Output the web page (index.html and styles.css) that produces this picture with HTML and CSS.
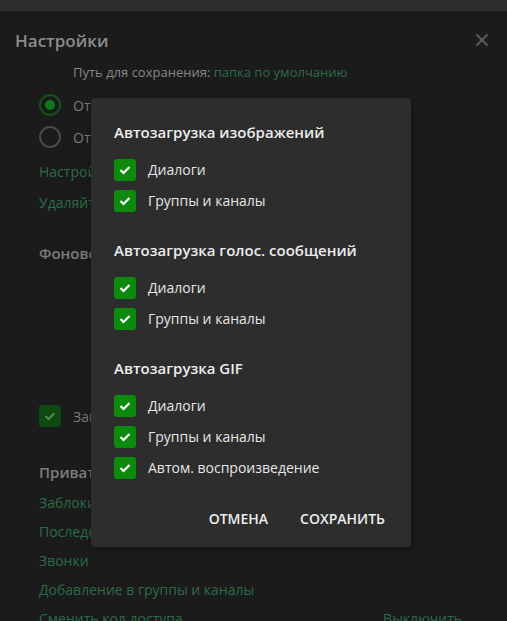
FILE: index.html
```html
<!DOCTYPE html>
<html lang="ru">
<head>
<meta charset="utf-8">
<link rel="stylesheet" href="styles.css">
</head>
<body>
<div class="topbar"></div>
<div class="settings">
  <div class="header">
    <span class="title">Настройки</span>
    <svg class="close" width="14" height="14" viewBox="0 0 14 14"><path d="M1.5 1.5 L12.5 12.5 M12.5 1.5 L1.5 12.5" stroke="#5c5c5c" stroke-width="2"/></svg>
  </div>
  <div class="path">Путь для сохранения: <span class="link">папка по умолчанию</span></div>
  <div class="radio-row r1"><span class="radio on"><span class="dot"></span></span><span class="muted">Отправлять</span></div>
  <div class="radio-row"><span class="radio"></span><span class="muted">Отправлять</span></div>
  <div class="link item l1">Настройки автозагрузки</div>
  <div class="link item">Удаляйте кэш</div>
  <div class="section">Фоновое изображение</div>
  <div class="bgcheck"><span class="cb-dim"><svg width="12" height="10" viewBox="0 0 12 10"><path d="M1.5 5 L4.5 8 L10.5 2" fill="none" stroke="#4f8a55" stroke-width="2"/></svg></span><span class="muted">Заменить</span></div>
  <div class="section priv">Приватность и безопасность</div>
  <div class="link item2 first">Заблокированные пользователи</div>
  <div class="link item2">Последняя активность</div>
  <div class="link item2">Звонки</div>
  <div class="link item2">Добавление в группы и каналы</div>
  <div class="item2 split"><span class="link">Сменить код доступа</span><span class="link">Выключить</span></div>
</div>

<div class="dialog">
  <div class="dtitle">Автозагрузка изображений</div>
  <div class="rows">
    <div class="row"><span class="cb"><svg width="12" height="10" viewBox="0 0 12 10"><path d="M1.5 5 L4.5 8 L10.5 2" fill="none" stroke="#fff" stroke-width="2.2"/></svg></span>Диалоги</div>
    <div class="row"><span class="cb"><svg width="12" height="10" viewBox="0 0 12 10"><path d="M1.5 5 L4.5 8 L10.5 2" fill="none" stroke="#fff" stroke-width="2.2"/></svg></span>Группы и каналы</div>
  </div>
  <div class="dtitle gap">Автозагрузка голос. сообщений</div>
  <div class="rows">
    <div class="row"><span class="cb"><svg width="12" height="10" viewBox="0 0 12 10"><path d="M1.5 5 L4.5 8 L10.5 2" fill="none" stroke="#fff" stroke-width="2.2"/></svg></span>Диалоги</div>
    <div class="row"><span class="cb"><svg width="12" height="10" viewBox="0 0 12 10"><path d="M1.5 5 L4.5 8 L10.5 2" fill="none" stroke="#fff" stroke-width="2.2"/></svg></span>Группы и каналы</div>
  </div>
  <div class="dtitle gap">Автозагрузка GIF</div>
  <div class="rows">
    <div class="row"><span class="cb"><svg width="12" height="10" viewBox="0 0 12 10"><path d="M1.5 5 L4.5 8 L10.5 2" fill="none" stroke="#fff" stroke-width="2.2"/></svg></span>Диалоги</div>
    <div class="row"><span class="cb"><svg width="12" height="10" viewBox="0 0 12 10"><path d="M1.5 5 L4.5 8 L10.5 2" fill="none" stroke="#fff" stroke-width="2.2"/></svg></span>Группы и каналы</div>
    <div class="row"><span class="cb"><svg width="12" height="10" viewBox="0 0 12 10"><path d="M1.5 5 L4.5 8 L10.5 2" fill="none" stroke="#fff" stroke-width="2.2"/></svg></span>Автом. воспроизведение</div>
  </div>
  <div class="buttons">
    <span class="btn">Отмена</span>
    <span class="btn">Сохранить</span>
  </div>
</div>
</body>
</html>
```

FILE: styles.css
```css
* { box-sizing: border-box; }
html, body { margin: 0; padding: 0; }
body {
  width: 507px;
  height: 621px;
  overflow: hidden;
  background: #1b1b1b;
  font-family: "Open Sans", "Liberation Sans", sans-serif;
  font-size: 14px;
  color: #8a8a8a;
  position: relative;
}
.topbar {
  height: 11px;
  background: #2e2e2e;
}
.settings {
  padding: 0 0 0 39px;
}
.header {
  display: flex;
  justify-content: space-between;
  align-items: center;
  height: 36px;
  margin: 11px 0 0 -24px;
  padding-right: 18px;
}
.title {
  font-size: 17px;
  font-weight: 600;
  color: #8c8c8c;
}
.close { display: block; }
.path {
  margin: 2px 0 0 34px;
  line-height: 24px;
  font-size: 13px;
  color: #868686;
}
.link { color: #2b6c47; }
.muted { color: #7a7a7a; }
.radio-row {
  display: flex;
  align-items: center;
  gap: 12px;
  height: 32px;
}
.radio-row.r1 { margin-top: 5px; }
.radio {
  width: 22px;
  height: 22px;
  border-radius: 50%;
  border: 2px solid #4a4a4a;
  display: flex;
  align-items: center;
  justify-content: center;
}
.radio.on { border-color: #14501f; }
.dot {
  width: 10px;
  height: 10px;
  border-radius: 50%;
  background: #0c7a18;
}
.item {
  line-height: 31px;
}
.item.l1 { margin-top: 3px; }
.section {
  margin-top: 23px;
  line-height: 24px;
  font-weight: 600;
  font-size: 15px;
  color: #7c7c7c;
}
.bgcheck {
  display: flex;
  align-items: center;
  gap: 12px;
  margin-top: 140px;
  height: 22px;
}
.cb-dim {
  width: 22px;
  height: 22px;
  border-radius: 3px;
  background: #0d4a12;
  display: flex;
  align-items: center;
  justify-content: center;
}
.section.priv { margin-top: 33px; }
.item2 {
  line-height: 29px;
}
.item2.first { margin-top: 4px; }
.split {
  display: flex;
  justify-content: space-between;
  padding-right: 45px;
}

.dialog {
  position: absolute;
  left: 91px;
  top: 98px;
  width: 320px;
  height: 449px;
  background: #2d2d2d;
  border-radius: 4px;
  padding: 22px 26px 11px 23px;
  color: #e6e6e6;
  box-shadow: 0 2px 8px rgba(0,0,0,0.3);
}
.dtitle {
  font-size: 15px;
  font-weight: 600;
  line-height: 24px;
  color: #ececec;
}
.dtitle.gap { margin-top: 22px; }
.rows { margin-top: 10px; }
.row {
  display: flex;
  align-items: center;
  gap: 12px;
  height: 31px;
  font-size: 14px;
  color: #e6e6e6;
}
.cb {
  width: 22px;
  height: 22px;
  border-radius: 3px;
  background: #0c8a0c;
  display: flex;
  align-items: center;
  justify-content: center;
  flex: none;
}
.cb svg { display: block; }
.buttons {
  margin-top: 17px;
  height: 36px;
  display: flex;
  justify-content: flex-end;
  align-items: center;
  gap: 32px;
}
.btn {
  font-size: 14px;
  font-weight: 600;
  text-transform: uppercase;
  color: #ececec;
}
```
